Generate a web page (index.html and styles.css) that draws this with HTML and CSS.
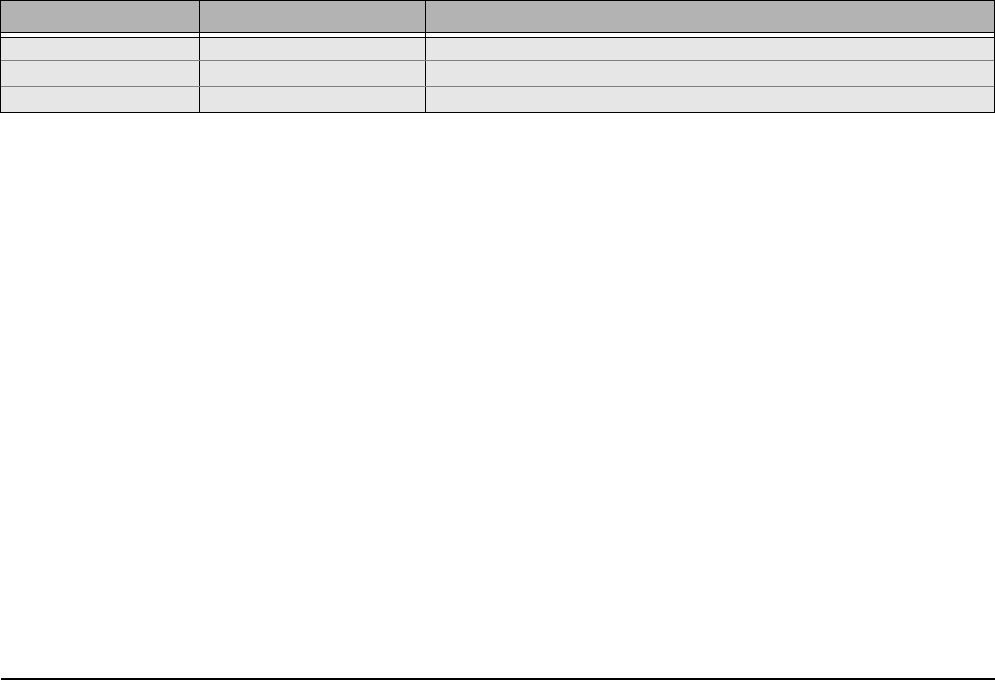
FILE: index.html
```html
<!DOCTYPE html>
<html>
<head>
<meta charset="utf-8">
<link rel="stylesheet" href="styles.css">
</head>
<body>
<div class="page">
  <div class="table">
    <div class="row head"><div class="c c1"></div><div class="c c2"></div><div class="c c3"></div></div>
    <div class="row gap"><div class="c c1"></div><div class="c c2"></div><div class="c c3"></div></div>
    <div class="row body r1"><div class="c c1"></div><div class="c c2"></div><div class="c c3"></div></div>
    <div class="row body r2"><div class="c c1"></div><div class="c c2"></div><div class="c c3"></div></div>
    <div class="row body r3"><div class="c c1"></div><div class="c c2"></div><div class="c c3"></div></div>
  </div>
  <div class="rule"></div>
</div>
</body>
</html>
```
FILE: styles.css
```css
html, body {
  margin: 0;
  padding: 0;
  background: #ffffff;
  font-family: "Liberation Sans", Arial, sans-serif;
}
.page {
  height: 680px;
  display: flex;
  flex-direction: column;
}
.table {
  width: 995px;
  box-sizing: border-box;
  border: 1px solid #000000;
  display: flex;
  flex-direction: column;
}
.row {
  display: flex;
  box-sizing: border-box;
}
.c {
  box-sizing: border-box;
}
.c1 {
  width: 199px;
  border-right: 1px solid #000000;
}
.c2 {
  width: 226px;
  border-right: 1px solid #000000;
}
.c3 {
  flex: 1;
}
.head {
  height: 32px;
  background: #b3b3b3;
  border-bottom: 1px solid #000000;
}
.gap {
  height: 5px;
  background: #ffffff;
  border-bottom: 1px solid #000000;
}
.body {
  background: #e6e6e6;
}
.r1 {
  height: 23px;
  border-bottom: 1px solid #808080;
}
.r2 {
  height: 26px;
  border-bottom: 1px solid #808080;
}
.r3 {
  height: 25px;
}
.rule {
  margin-top: auto;
  margin-left: 1px;
  width: 994px;
  height: 2px;
  background: #000000;
}
```
